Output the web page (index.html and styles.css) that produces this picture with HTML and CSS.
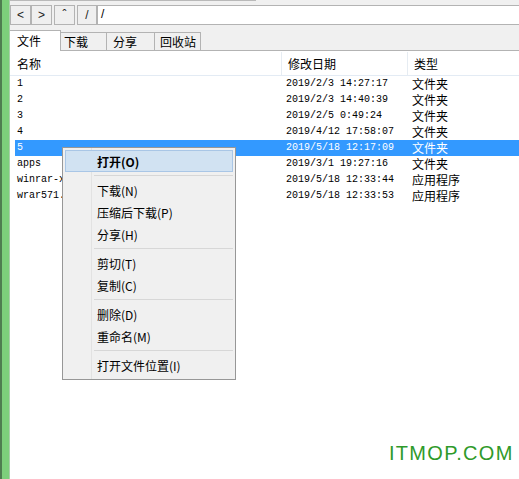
FILE: index.html
```html
<!DOCTYPE html>
<html>
<head>
<meta charset="utf-8">
<link rel="stylesheet" href="styles.css">
</head>
<body>
<div class="app">
  <div class="strip"></div>
  <div class="main">
    <div class="topband"><span class="topseg"></span></div>
    <div class="navrow">
      <span class="btn">&lt;</span>
      <span class="btn">&gt;</span>
      <span class="btn gap">&#710;</span>
      <span class="btn gap narrow">/</span>
      <div class="addr">/</div>
    </div>
    <div class="tabrow">
      <span class="tab active">文件</span>
      <span class="tab t2">下载</span>
      <span class="tab t3">分享</span>
      <span class="tab t4">回收站</span>
      <span class="tabfill"></span>
    </div>
    <div class="list">
      <div class="head">
        <span class="c1">名称</span>
        <span class="c2">修改日期</span>
        <span class="c3">类型</span>
      </div>
      <div class="row"><span class="c1 mono">1</span><span class="c2 mono">2019/2/3 14:27:17</span><span class="c3">文件夹</span></div>
      <div class="row"><span class="c1 mono">2</span><span class="c2 mono">2019/2/3 14:40:39</span><span class="c3">文件夹</span></div>
      <div class="row"><span class="c1 mono">3</span><span class="c2 mono">2019/2/5 0:49:24</span><span class="c3">文件夹</span></div>
      <div class="row"><span class="c1 mono">4</span><span class="c2 mono">2019/4/12 17:58:07</span><span class="c3">文件夹</span></div>
      <div class="row sel"><span class="c1 mono">5</span><span class="c2 mono">2019/5/18 12:17:09</span><span class="c3">文件夹</span></div>
      <div class="row"><span class="c1 mono">apps</span><span class="c2 mono">2019/3/1 19:27:16</span><span class="c3">文件夹</span></div>
      <div class="row"><span class="c1 mono">winrar-x64-571sc.exe</span><span class="c2 mono">2019/5/18 12:33:44</span><span class="c3">应用程序</span></div>
      <div class="row"><span class="c1 mono">wrar571.exe</span><span class="c2 mono">2019/5/18 12:33:53</span><span class="c3">应用程序</span></div>
    </div>
  </div>
</div>

<div class="menu">
  <div class="mi hl"><b>打开(O)</b></div>
  <div class="sep"></div>
  <div class="mi">下载(N)</div>
  <div class="mi">压缩后下载(P)</div>
  <div class="mi">分享(H)</div>
  <div class="sep"></div>
  <div class="mi">剪切(T)</div>
  <div class="mi">复制(C)</div>
  <div class="sep"></div>
  <div class="mi">删除(D)</div>
  <div class="mi">重命名(M)</div>
  <div class="sep"></div>
  <div class="mi">打开文件位置(I)</div>
</div>

<div class="mark">ITMOP.COM</div>
</body>
</html>
```

FILE: styles.css
```css
* { box-sizing: border-box; }
html, body {
  margin: 0;
  padding: 0;
  width: 519px;
  height: 479px;
  overflow: hidden;
  background: #fff;
  font-family: "Noto Sans CJK SC", "Liberation Sans", sans-serif;
  font-size: 12px;
  color: #000;
}
.app {
  display: flex;
  height: 479px;
}
.strip {
  width: 10px;
  flex: none;
  background: #7dcf7b;
  border-left: 2px solid #4f7d50;
  border-right: 1px solid #a9cfa9;
}
.main {
  flex: 1;
  display: flex;
  flex-direction: column;
  min-width: 0;
}
.topband {
  height: 5px;
  background: #f0f0f0;
  display: flex;
}
.topseg {
  width: 246px;
  height: 1px;
  background: #b9b9b9;
}
.navrow {
  height: 20px;
  display: flex;
  background: #f0f0f0;
}
.btn {
  width: 21px;
  height: 20px;
  flex: none;
  border: 1px solid #b3b3b3;
  background: #efefef;
  display: flex;
  align-items: center;
  justify-content: center;
  font-family: "Liberation Sans", sans-serif;
  font-size: 12px;
  color: #222;
}
.btn.gap { margin-left: 2px; }
.btn.narrow { width: 20px; }
.addr {
  flex: 1;
  height: 20px;
  background: #fff;
  border-top: 1px solid #b3b3b3;
  border-bottom: 1px solid #b3b3b3;
  border-left: 1px solid #b3b3b3;
  padding-left: 3px;
  font-family: "Liberation Sans", sans-serif;
  font-size: 12px;
  line-height: 17px;
}
.tabrow {
  height: 26px;
  background: #f0f0f0;
  display: flex;
  align-items: flex-end;
}
.tab {
  height: 19px;
  flex: none;
  border: 1px solid #b3b3b3;
  border-left: none;
  padding: 0 0 0 3px;
  background: #f0f0f0;
  font-size: 12px;
  line-height: 17px;
  white-space: nowrap;
  overflow: visible;
}
.tab.active {
  height: 21px;
  border-bottom: none;
  background: #fff;
  padding-left: 7px;
  line-height: 19px;
  width: 51px;
}
.tab.t2 { width: 46px; }
.tab.t3 { width: 48px; padding-left: 6px; }
.tab.t4 { width: 46px; padding-left: 5px; }
.tabfill {
  flex: 1;
  height: 1px;
  background: #b3b3b3;
}
.list {
  flex: 1;
  background: #fff;
  padding-top: 1px;
}
.head {
  height: 24px;
  display: flex;
  align-items: center;
  border-bottom: 1px solid #e3ebf4;
  font-size: 12px;
}
.head .c1 { width: 271px; padding-left: 7px; }
.head .c2 {
  width: 126px;
  padding-left: 6px;
  border-left: 1px solid #e6ecf2;
  height: 23px;
  line-height: 23px;
}
.head .c3 {
  flex: 1;
  padding-left: 6px;
  border-left: 1px solid #e6ecf2;
  height: 23px;
  line-height: 23px;
}
.row {
  height: 16px;
  display: flex;
  align-items: center;
  margin-left: 5px;
  line-height: 16px;
  white-space: nowrap;
}
.row .c1 { width: 271px; padding-left: 2px; overflow: hidden; }
.row .c2 { width: 126px; }
.row .c3 { flex: 1; font-size: 12px; }
.mono {
  font-family: "Liberation Mono", monospace;
  font-size: 10px;
}
.row.sel {
  background: #3399ff;
  color: #fff;
}
.menu {
  position: absolute;
  left: 62px;
  top: 147px;
  width: 174px;
  padding: 2px 2px 3px 2px;
  background: #f0f0f0;
  border: 1px solid #979797;
  background-image: linear-gradient(#e2e2e2, #e2e2e2);
  background-repeat: no-repeat;
  background-size: 1px 100%;
  background-position: 28px 0;
}
.mi {
  height: 22px;
  line-height: 21px;
  padding-left: 31px;
  font-size: 12px;
  border: 1px solid transparent;
  color: #000;
}
.mi.hl {
  background: #d1e2f2;
  border-color: #a9c6e6;
}
.mi b { font-weight: bold; }
.sep {
  height: 7px;
  margin-left: 29px;
  display: flex;
  align-items: center;
}
.sep::before {
  content: "";
  display: block;
  width: 100%;
  height: 1px;
  background: #d7d7d7;
}
.mark {
  position: absolute;
  left: 389px;
  top: 442px;
  font-family: "Liberation Sans", sans-serif;
  font-size: 20px;
  color: #2f9a2a;
  letter-spacing: 1.3px;
}
```
